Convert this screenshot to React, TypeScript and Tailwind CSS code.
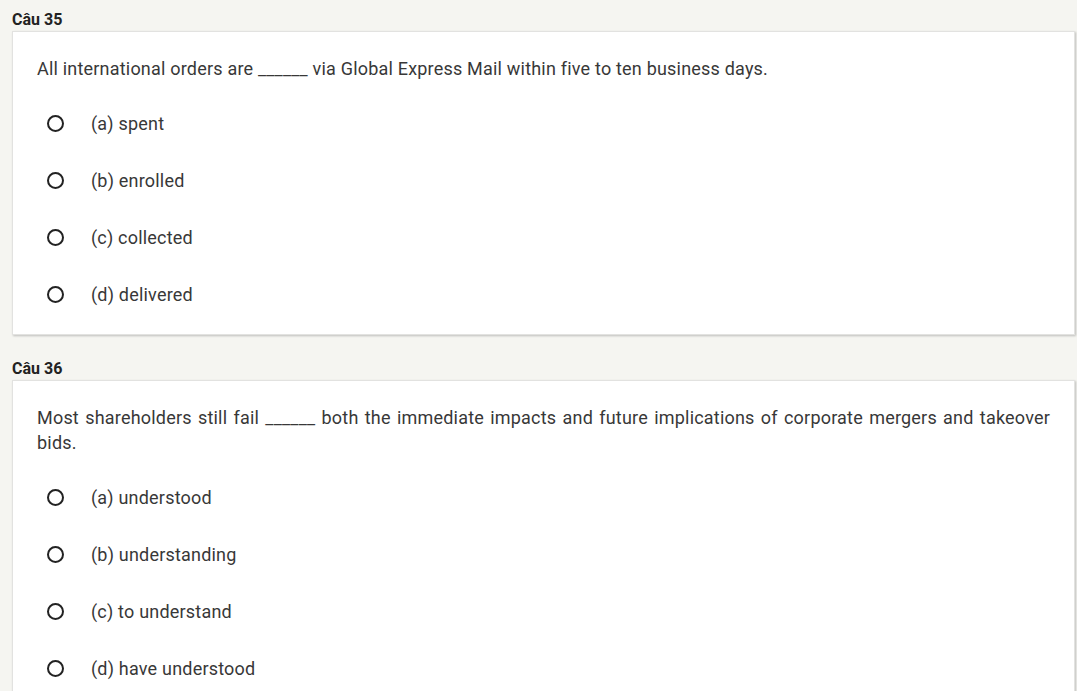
import React from "react";

type Q = { label: string; text: string; options: string[] };

const questions: Q[] = [
  {
    label: "Câu 35",
    text: "All international orders are ______ via Global Express Mail within five to ten business days.",
    options: ["(a) spent", "(b) enrolled", "(c) collected", "(d) delivered"],
  },
  {
    label: "Câu 36",
    text: "Most shareholders still fail ______ both the immediate impacts and future implications of corporate mergers and takeover bids.",
    options: ["(a) understood", "(b) understanding", "(c) to understand", "(d) have understood"],
  },
];

export default function App() {
  return (
    <div
      className="min-h-[691px] bg-[#f5f5f1] pl-[12px] pr-[2px] pt-[10px]"
      style={{ fontFamily: "Roboto, 'Liberation Sans', sans-serif" }}
    >
      {questions.map((q, i) => (
        <div key={i} className="mb-[24px]">
          <div className="text-[16px] leading-[20px] font-bold text-[#222] mb-[1px]">{q.label}</div>
          <div className="bg-white border border-[#e2e2e0] shadow-[1px_1px_2px_rgba(0,0,0,0.22)] pl-[24px] pr-[24px] pt-[24px] pb-[11px]">
            <p className="text-[18px] leading-[25px] tracking-[0.2px] text-[#383838] text-justify">{q.text}</p>
            <div className="mt-[14px] flex flex-col">
              {q.options.map((o, j) => (
                <div key={j} className="h-[57px] flex items-center">
                  <div className="ml-[10px] w-[17px] h-[17px] rounded-full border-2 border-[#222]" />
                  <span className="ml-[27px] text-[18px] tracking-[0.2px] text-[#383838]">{o}</span>
                </div>
              ))}
            </div>
          </div>
        </div>
      ))}
    </div>
  );
}
